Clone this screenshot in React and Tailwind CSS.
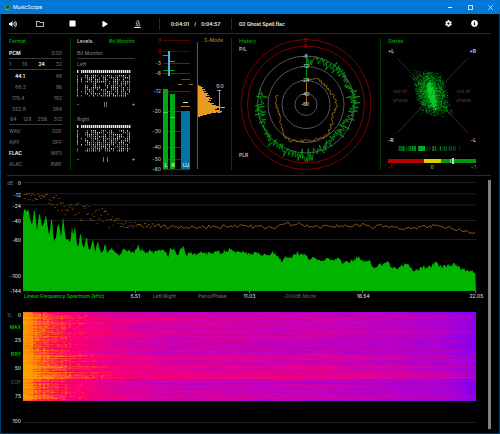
import { FaPlay, FaStop, FaVolumeUp, FaRegFolder, FaCog, FaInfoCircle } from 'react-icons/fa'
import clsx from 'clsx'

// small seeded generator so the meters look the same on every load
function createRandom(seed) {
  let s = seed
  return () => {
    s = (s * 1664525 + 1013904223) % 4294967296
    return s / 4294967296
  }
}

function interpolate(points, x) {
  if (x <= points[0][0]) return points[0][1]
  for (let i = 1; i < points.length; i++) {
    if (x <= points[i][0]) {
      const [x0, y0] = points[i - 1]
      const [x1, y1] = points[i]
      return y0 + ((y1 - y0) * (x - x0)) / (x1 - x0)
    }
  }
  return points[points.length - 1][1]
}

const FORMAT_ROWS = [
  { items: ['PCM', 'DSD'], active: 'PCM', line: true },
  { items: ['1', '16', '24', '32'], active: '24', line: true },
  { items: ['44.1', '48'], active: '44.1', inset: 'pl-[6px]' },
  { items: ['88.2', '96'], inset: 'pl-[6px]' },
  { items: ['176.4', '192'], inset: 'pl-[3px]' },
  { items: ['352.8', '384'], inset: 'pl-[3px]' },
  { items: ['64', '128', '256', '512'], line: true, inset: 'pl-px' },
  { items: ['WAV', 'DSF'] },
  { items: ['AIFF', 'DFF'] },
  { items: ['FLAC', 'MP3'], active: 'FLAC' },
  { items: ['ALAC', 'BWF'] },
]

function TitleBar() {
  return (
    <header className="flex h-3.5 items-center bg-[#0078d7] pl-1 text-white">
      <svg className="h-[7px] w-[7px]" viewBox="0 0 14 14">
        <circle cx="7" cy="7" r="7" fill="#1d8f86" />
        <path d="M5 11 L8 3 L10 7 L9 12 M4 5 L7 7" stroke="#0b3a36" strokeWidth="1.8" fill="none" />
        <path d="M3 10 Q7 13 11 9" stroke="#8fe0c4" strokeWidth="1" fill="none" />
      </svg>
      <h1 className="ml-[2px] font-normal">MusicScope</h1>
      <div className="ml-auto flex h-full">
        <button aria-label="Minimize" className="flex w-5 items-center justify-center">
          <span className="h-px w-1 bg-white" />
        </button>
        <button aria-label="Maximize" className="flex w-5 items-center justify-center">
          <span className="h-[5px] w-[5px] border border-white/80" />
        </button>
        <button aria-label="Close" className="flex w-5 items-center justify-center">
          <svg className="h-[5px] w-[5px]" viewBox="0 0 5 5">
            <path d="M0.3 0.3 L4.7 4.7 M4.7 0.3 L0.3 4.7" stroke="#fff" strokeWidth="0.7" />
          </svg>
        </button>
      </div>
    </header>
  )
}

function MicroscopeIcon() {
  return (
    <svg className="h-2 w-[7px]" viewBox="0 0 14 16" fill="none" stroke="#eee" strokeWidth="1.3">
      <path d="M7 1 L4 7.5 L7.5 9 L10 2.4 Z" />
      <path d="M10 6 Q13.5 9 10 12 M3 11.5 H11" />
      <path d="M0.5 15 H13.5" strokeWidth="2" />
    </svg>
  )
}

function Toolbar() {
  const iconButton = 'flex h-full items-center justify-center'
  return (
    <div className="mr-2 ml-[6px] flex h-5 items-center border-b border-[#004a00] font-semibold text-gray-100">
      <button aria-label="Volume" className={clsx(iconButton, 'w-3')}>
        <FaVolumeUp className="h-2 w-2" />
      </button>
      <button aria-label="Open" className={clsx(iconButton, 'ml-[5px] w-8')}>
        <FaRegFolder className="h-2 w-2" />
      </button>
      <button aria-label="Stop" className={clsx(iconButton, 'w-8')}>
        <FaStop className="h-[7px] w-[7px] text-white" />
      </button>
      <button aria-label="Play" className={clsx(iconButton, 'w-[33px]')}>
        <FaPlay className="h-1.5 w-1.5 text-white" />
      </button>
      <button aria-label="Analyse" className={clsx(iconButton, 'w-[33px]')}>
        <MicroscopeIcon />
      </button>
      <div className="ml-[5px] flex h-3 w-[73px] items-center justify-center gap-[5px] border-x border-[#004000]">
        <span>0:04:01</span>
        <span>/</span>
        <span>0:04:57</span>
      </div>
      <p className="ml-[7px]">02 Ghost Spell.flac</p>
      <div className="mr-1 ml-auto flex h-full">
        <button aria-label="Settings" className={clsx(iconButton, 'w-[26px]')}>
          <FaCog className="h-[7px] w-[7px]" />
        </button>
        <button aria-label="Info" className={clsx(iconButton, 'w-[26px]')}>
          <FaInfoCircle className="h-[7px] w-[7px] text-white" />
        </button>
      </div>
    </div>
  )
}

function FormatPanel() {
  return (
    <section className="border-r border-[#003c00] pr-2 pl-[2px]">
      <h2 className="h-2.5 text-[#00b400]">Format</h2>
      {FORMAT_ROWS.map((row) => (
        <div
          key={row.items[0]}
          className={clsx(
            'flex h-[11px] items-center justify-between',
            row.line && 'border-b border-[#3a3a3a]',
            row.inset
          )}
        >
          {row.items.map((item) => (
            <button
              key={item}
              className={clsx(item === row.active ? 'font-semibold text-white' : 'text-[#666]')}
            >
              {item}
            </button>
          ))}
        </div>
      ))}
    </section>
  )
}

function BitMatrix({ seed }) {
  const random = createRandom(seed)
  let top = ''
  let bright = ''
  let dim = ''
  for (let c = 0; c < 27; c++) {
    const x = c * 2
    if (c === 1) continue
    top += `M${x} 0h1.4v3h-1.4z`
    const density = c === 0 ? 0.9 : c < 4 ? 0.15 : 0.45 + random() * 0.5
    for (let r = 0; r < 11; r++) {
      if (random() > density) continue
      const cell = `M${x} ${5 + r * 2}h1v1.6h-1z`
      if (random() > 0.5) bright += cell
      else dim += cell
    }
  }
  return (
    <svg className="h-7 w-[54px]" viewBox="0 0 54 28">
      <path d={top} fill="#e8e8e8" />
      <path d={bright} fill="#c8c8c8" />
      <path d={dim} fill="#777" />
    </svg>
  )
}

function BitChannel({ name, seed, gap }) {
  return (
    <div>
      <h3 className="h-[11px] leading-[11px] text-[#777]">{name}</h3>
      <BitMatrix seed={seed} />
      <div className="flex h-3 items-center justify-between text-gray-300">
        <button aria-label={`${name} less`}>-</button>
        <span className={clsx('flex', gap)}>
          <span className="h-[5px] w-px bg-gray-500" />
          <span className="h-[5px] w-px bg-gray-500" />
        </span>
        <button aria-label={`${name} more`}>+</button>
      </div>
    </div>
  )
}

function LevelsPanel() {
  return (
    <section className="pr-[11px] pl-[6px]">
      <div className="flex h-2.5 items-start justify-between">
        <button className="text-gray-300">Levels</button>
        <button className="text-[#00b400]">Bit Monitor</button>
      </div>
      <h2 className="h-[11px] border-b border-[#3a3a3a] leading-[11px] text-[#777]">Bit Monitor</h2>
      <div className="flex flex-col gap-1">
        <BitChannel name="Left" seed={11} gap="gap-px" />
        <BitChannel name="Right" seed={47} gap="gap-[3px]" />
      </div>
    </section>
  )
}

const METER_SCALE = [
  [3, 2], [0, 13], [-3, 25], [-6, 35], [-12, 53], [-20, 73], [-30, 93], [-40, 109], [-50, 121], [-60, 131],
]

const S_MODE_BINS = [
  1, 3, 5, 4, 7, 5, 8, 6, 10, 9, 11, 8, 12, 14, 11, 13, 10, 12, 16, 14, 18, 22, 27, 19, 17, 21, 24, 18, 13, 9, 5, 2,
]

function MeterPanel() {
  return (
    <section className="flex justify-between border-r border-[#003c00]">
      <svg className="h-[132px] w-12 shrink-0 overflow-visible" viewBox="0 0 48 132">
        {METER_SCALE.map(([label, y]) => (
          <g key={label}>
            <rect x="17" y={y} width="27" height="1" fill={label >= 0 ? '#5a0000' : '#303030'} />
            <text x="15" y={y + 2} textAnchor="end" fontSize="5" fill={label >= 0 ? '#c00000' : '#bbb'}>
              {label}
            </text>
          </g>
        ))}
        <rect x="17" y="51" width="5" height="80" fill="#00a814" />
        <rect x="24" y="56" width="5" height="75" fill="#00a814" />
        <rect x="35" y="73" width="9" height="58" fill="#0073a8" />
        <rect x="17" y="74" width="5" height="1" fill="#30e040" />
        <rect x="24" y="79" width="5" height="1" fill="#30e040" />
        <rect x="17" y="17" width="5" height="1" fill="#00b868" />
        <rect x="24" y="23" width="5" height="1" fill="#00b868" />
        <rect x="17" y="32" width="5" height="1" fill="#00a000" />
        <rect x="24" y="32" width="5" height="1" fill="#00a000" />
        <rect x="22" y="13" width="2" height="25" fill="#48b4e4" />
        <rect x="35" y="41" width="9" height="1" fill="#00699b" />
        <rect x="32" y="46" width="4" height="1" fill="#a06818" />
        <rect x="43" y="46" width="4" height="1" fill="#a06818" />
        <rect x="37" y="64" width="5" height="1" fill="#ddd" />
        <rect x="35" y="68" width="9" height="1" fill="#c07c20" />
        <g fontSize="5" fill="#e0f4e0" textAnchor="middle">
          <text x="20" y="129">L</text>
          <text x="27" y="129">R</text>
          <text x="40" y="129">LU</text>
        </g>
      </svg>
      <div className="flex w-9 flex-col">
        <button className="pl-px text-center leading-1 text-[#b07820]">S-Mode</button>
        <svg className="h-32 w-9" viewBox="0 0 36 128">
          <rect x="2" y="0" width="1" height="127" fill="#7a5010" />
          {S_MODE_BINS.map((w, i) => (
            <rect key={i} x="3" y={43 + i} width={w} height="1" fill="#e89a24" />
          ))}
          <path d="M22 48.5 H26 M22 70.5 H26 M24.5 48 V71" stroke="#999" strokeWidth="1" fill="none" />
          <text x="25" y="46" fontSize="5" fill="#c0c0c0" textAnchor="middle">
            9.0
          </text>
        </svg>
      </div>
    </section>
  )
}

const HISTORY_RINGS = [
  { label: '3', r: 65, y: 2 },
  { label: '0', r: 58.5, y: 8 },
  { label: '-6', r: 48.5, y: 18 },
  { label: '-12', r: 38, y: 28 },
  { label: '-24', r: 24, y: 42 },
  { label: '-40', r: 11, y: 56 },
  { label: '-60', r: 0, y: 66 },
]

const PEAK_RADIUS = [[0, 44], [20, 46], [45, 47], [90, 48], [115, 43], [140, 44], [160, 48], [180, 51], [215, 51], [240, 47], [270, 44], [289, 46]]
const LOUDNESS_RADIUS = [[0, 25], [20, 28], [45, 27], [65, 28], [90, 31], [115, 29], [140, 36], [160, 37], [180, 36], [212, 40], [225, 34], [250, 28], [270, 29], [289, 31]]

function polarTrace(profile, jitter, step, seed) {
  const random = createRandom(seed)
  let d = ''
  for (let a = 0; a <= 289; a += step) {
    const r = interpolate(profile, a) + (random() - 0.5) * jitter * (random() > 0.6 ? 1 : 0.5)
    const rad = (a * Math.PI) / 180
    d += `${d ? 'L' : 'M'}${(74 + r * Math.sin(rad)).toFixed(1)} ${(66.5 - r * Math.cos(rad)).toFixed(1)}`
  }
  return d
}

function HistoryPanel() {
  return (
    <section className="relative border-r border-[#003c00]">
      <svg className="h-[132px] w-full overflow-visible" viewBox="0 0 148 132">
        {HISTORY_RINGS.map((ring) => (
          <circle
            key={ring.label}
            cx="74"
            cy="66.5"
            r={ring.r}
            fill="none"
            strokeWidth="1"
            stroke={ring.r > 50 ? '#800000' : '#555'}
          />
        ))}
        <path d={polarTrace(PEAK_RADIUS, 14, 1.1, 5)} fill="none" stroke="#00a810" strokeWidth="0.8" />
        <path d={polarTrace(LOUDNESS_RADIUS, 4, 2.2, 23)} fill="none" stroke="#b87818" strokeWidth="0.8" />
        <rect x="74" y="20" width="1" height="24" fill="#008c00" />
        <rect x="74" y="44" width="1" height="23" fill="#a86c14" />
        {HISTORY_RINGS.map((ring) => (
          <text
            key={ring.label}
            x="73"
            y={ring.y + 2}
            textAnchor="middle"
            fontSize="5"
            fill={ring.r > 50 ? '#d00000' : '#d0d0d0'}
          >
            {ring.label}
          </text>
        ))}
      </svg>
      <div className="absolute inset-y-0 left-[7px] flex flex-col">
        <h2 className="text-[#00b400]">History</h2>
        <span className="mt-[2px] text-gray-300">P/L</span>
        <span className="mt-auto mb-3 text-gray-300">PLR</span>
      </div>
    </section>
  )
}

function Goniometer() {
  const random = createRandom(91)
  const spread = () => random() + random() - 1
  let dim = ''
  let mid = ''
  let core = ''
  for (let i = 0; i < 2400; i++) {
    const v = spread()
    const x = (43 + v * 6 + spread() * 17).toFixed(1)
    const y = (45 + v * 24).toFixed(1)
    const dot = `M${x} ${y}h.8v.8h-.8z`
    if (i % 3) dim += dot
    else mid += dot
  }
  for (let i = 0; i < 420; i++) {
    const v = random() - 0.5
    core += `M${(43.5 + v * 5 + spread() * 4).toFixed(1)} ${(47 + v * 22 + spread() * 5).toFixed(1)}h.8v.8h-.8z`
  }
  return (
    <svg className="absolute inset-0 h-full w-full" viewBox="0 0 88 95">
      <path d="M9 10 L80 85 M80 10 L9 85" stroke="#2c2c2c" strokeWidth="1" />
      <path d={dim} fill="#006a0c" />
      <path d={mid} fill="#00a018" />
      <path d={core} fill="#10d030" />
    </svg>
  )
}

function BalanceStrip() {
  const random = createRandom(8)
  const bars = []
  for (let x = 8; x < 80; x++) {
    const near = 1.2 - Math.abs(x - 34) / 42
    const level = random() * near
    if (level > 0.15) bars.push({ x, level })
  }
  return (
    <svg className="mt-[3px] h-[5px] w-full" viewBox="0 0 88 5" preserveAspectRatio="none">
      {bars.map((bar) => (
        <rect key={bar.x} x={bar.x} y="0" width="1" height="5" fill="#00b030" opacity={bar.level} />
      ))}
    </svg>
  )
}

function StereoPanel() {
  return (
    <section className="pr-[15px] pl-[7px]">
      <h2 className="h-2.5 text-[#00b400]">Stereo</h2>
      <div className="relative h-[95px]">
        <Goniometer />
        <div className="relative flex h-full flex-col justify-between text-gray-200">
          <div className="flex justify-between">
            <span>+L</span>
            <span>+R</span>
          </div>
          <div className="flex justify-between px-[5px] leading-[9px] text-[#3c3c3c]">
            <p>
              out of
              <br />
              phase
            </p>
            <p>
              out of
              <br />
              phase
            </p>
          </div>
          <div className="flex justify-between">
            <span>-R</span>
            <span>-L</span>
          </div>
        </div>
      </div>
      <BalanceStrip />
      <div className="relative mt-2 flex h-1">
        <div className="w-[41%] bg-[#b80000]" />
        <div className="w-[19%] bg-[#d8d000]" />
        <div className="w-[40%] bg-[#009810]" />
        <div className="absolute -top-px left-[73%] h-1.5 w-[2px] bg-[#c8d8c8]" />
        <div className="absolute top-0 left-[71%] h-1 w-px bg-[#60c870]" />
      </div>
      <div className="mt-px grid grid-cols-3">
        <span className="text-[#c00000]">-1</span>
        <span className="text-center text-[#c0b800]">0</span>
        <span className="text-right text-[#00a810]">+1</span>
      </div>
    </section>
  )
}

// level outline in plot units, 1358 wide and 327 high
const LEVEL_OUTLINE = [
  [0, 106], [4, 76], [10, 90], [16, 80], [22, 116], [28, 130], [34, 74], [42, 146], [49, 88], [57, 134], [62, 126],
  [69, 100], [79, 166], [86, 96], [92, 180], [99, 166], [104, 124], [110, 136], [114, 166], [120, 104], [128, 172],
  [135, 172], [142, 182], [147, 134], [151, 166], [155, 125], [162, 190], [167, 194], [172, 146], [179, 195],
  [184, 196], [191, 158], [196, 202], [202, 206], [209, 164], [216, 206], [224, 180], [232, 211], [240, 206],
  [246, 180], [252, 216], [260, 204], [267, 201], [272, 208], [284, 211], [292, 221], [302, 201], [307, 208],
  [317, 206], [327, 211], [337, 208], [345, 190], [352, 204], [362, 204], [370, 216], [377, 206], [392, 211],
  [402, 206], [417, 204], [432, 214], [437, 226], [440, 197], [452, 204], [462, 216], [472, 206], [482, 195],
  [490, 218], [502, 211], [512, 216], [532, 211], [552, 214], [572, 212], [592, 211], [622, 201], [632, 211],
  [667, 208], [680, 221], [697, 206], [707, 218], [722, 216], [737, 216], [752, 210], [767, 226], [777, 241],
  [785, 224], [802, 228], [822, 212], [832, 221], [845, 214], [857, 231], [872, 226], [892, 234], [912, 232],
  [932, 238], [944, 228], [957, 244], [967, 234], [987, 238], [1002, 226], [1022, 236], [1040, 238], [1052, 261],
  [1067, 248], [1092, 240], [1107, 256], [1122, 261], [1147, 246], [1162, 258], [1177, 266], [1197, 256],
  [1217, 256], [1237, 241], [1257, 256], [1287, 246], [1307, 254], [1327, 266], [1342, 264], [1358, 276],
]

const PEAK_HOLD = [
  [0, 42], [60, 44], [90, 56], [120, 72], [150, 78], [190, 96], [230, 100], [270, 118], [330, 125], [380, 131],
  [470, 137], [570, 134], [682, 134], [760, 137], [782, 120], [800, 128], [830, 126], [860, 134], [930, 134],
  [1030, 127], [1050, 136], [1082, 130], [1150, 141], [1230, 131], [1280, 138], [1320, 147], [1358, 154],
]

const PEAK_SPREAD = [[0, 20], [60, 22], [120, 54], [250, 50], [300, 28], [360, 18], [420, 12], [1358, 10]]

function Spectrum() {
  const random = createRandom(3)
  let outline = 'M0 327'
  for (let x = 0; x <= 1358; x += 3) {
    const y = interpolate(LEVEL_OUTLINE, x) + (x > 200 ? (random() - 0.5) * 12 : 0)
    outline += `L${x} ${y.toFixed(0)}`
  }
  outline += 'L1358 327Z'

  let dots = ''
  let line = ''
  for (let x = 2; x <= 1358; x += 3) {
    const y = interpolate(PEAK_HOLD, x) + (random() - 0.5) * interpolate(PEAK_SPREAD, x)
    if (x < 400) dots += `M${x} ${y.toFixed(0)}h3v3h-3z`
    else if (x % 2) line += `${line ? 'L' : 'M'}${x} ${y.toFixed(0)}`
  }

  return (
    <svg className="mt-[2px] h-[109px] w-full" viewBox="0 0 1358 327" preserveAspectRatio="none">
      {[0, 34, 67, 114, 171].map((y) => (
        <rect key={y} x="0" y={y} width="1358" height="3" fill="#1e1e1e" />
      ))}
      <path d={dots} fill="#946210" />
      <path d={line} fill="none" stroke="#946210" strokeWidth="2.6" />
      <path d={outline} fill="#00b400" />
    </svg>
  )
}

const HEAT_STOPS = [
  [0, [112, 0, 255]],
  [0.2, [160, 0, 220]],
  [0.36, [196, 0, 184]],
  [0.5, [232, 0, 140]],
  [0.62, [255, 0, 104]],
  [0.74, [255, 60, 56]],
  [0.86, [255, 128, 10]],
  [1, [255, 160, 0]],
]

function heatColor(t) {
  const channel = (i) => Math.round(interpolate(HEAT_STOPS.map(([p, rgb]) => [p, rgb[i]]), t))
  return `rgb(${channel(0)},${channel(1)},${channel(2)})`
}

const HEAT_BY_FREQUENCY = [
  [0, 0.94], [6, 0.9], [10, 0.82], [16, 0.76], [26, 0.71], [40, 0.64], [60, 0.56], [85, 0.49], [120, 0.43], [200, 0.4],
  [300, 0.37], [370, 0.32], [420, 0.26], [440, 0.19], [452, 0.12],
]

const HEAT_BY_TIME = [[0, 0], [8, 0.03], [18, 0], [36, -0.03], [44, 0.04], [58, 0.06], [63, 0.06], [64, 0.1], [66, 0.11], [67, -0.03], [80, -0.02], [89, -0.01]]

function Spectrogram() {
  const random = createRandom(77)
  const levels = 32
  const paths = new Array(levels).fill('')
  const columns = Array.from({ length: 226 }, () => random() - 0.5)
  for (let y = 0; y < 89; y++) {
    const row = interpolate(HEAT_BY_TIME, y) + (random() - 0.5) * 0.11
    let streak = 0
    for (let c = 0; c < 226; c++) {
      const x = c * 2
      const left = Math.max(0, 1 - x / 170)
      streak = streak * 0.9 + (random() - 0.5) * 0.04
      const tonal = x < 8 ? 0 : left * (columns[c] * 0.08 + (random() > 0.84 ? 0.12 : 0))
      let t = interpolate(HEAT_BY_FREQUENCY, x) + row + streak + tonal
      if (y === 0 || y === 88) t -= 0.12
      const bucket = Math.min(levels - 1, Math.max(0, Math.floor(t * levels)))
      paths[bucket] += `M${x} ${y}h2v1h-2z`
    }
  }
  return (
    <svg className="h-[89px] w-full" viewBox="0 0 452 89" preserveAspectRatio="none" shapeRendering="crispEdges">
      {paths.map((d, i) => d && <path key={i} d={d} fill={heatColor(i / (levels - 1))} />)}
    </svg>
  )
}

function SpectrumSection() {
  return (
    <section className="flex">
      <div className="mr-[2px] w-3.5 shrink-0 text-right text-gray-300">
        <div className="flex h-3 justify-between">
          <span className="text-[#666]">dB</span>
          <span>0</span>
        </div>
        <div className="h-[11px]">-12</div>
        <div className="h-[15px]">-24</div>
        <div className="h-[19px]">-40</div>
        <div className="h-9">-60</div>
        <div className="h-[15px]">-100</div>
        <div>-144</div>
      </div>
      <div className="min-w-0 flex-1">
        <div className="pr-3">
          <Spectrum />
          <div className="grid h-[2px] grid-cols-4">
            <span className="border-r border-gray-500" />
            <span className="border-r border-gray-500" />
            <span className="border-r border-gray-500" />
            <span className="border-r border-gray-500" />
          </div>
        </div>
        <div className="grid grid-cols-[105fr_14fr_44fr_52fr_22fr_78fr_49fr_77fr_23fr] text-center whitespace-nowrap text-gray-300">
          <button className="pl-px text-left text-[#00c400]">Linear Frequency Spectrum [kHz]</button>
          <span>5.51</span>
          <button className="text-[#6a6a6a]">Left/Right</button>
          <button className="text-[#6a6a6a]">Pano/Phase</button>
          <span>11.03</span>
          <button className="text-[#5a5a5a]">-200dB Mode</button>
          <span>16.54</span>
          <span />
          <span>22.05</span>
        </div>
      </div>
    </section>
  )
}

function SpectrogramSection() {
  return (
    <section className="mt-[13px] flex">
      <div className="mr-[2px] w-3.5 shrink-0 text-right text-gray-300">
        <div className="flex h-3 justify-between">
          <span className="text-[#777]">%</span>
          <span>0</span>
        </div>
        <button className="block h-[13px] w-full text-right text-[#00c400]">
          <span className="block h-full">MAX</span>
        </button>
        <div className="h-3.5">25</div>
        <button className="block h-3.5 w-full text-right text-[#00c400]">
          <span className="block h-full">BRY</span>
        </button>
        <div className="h-3.5">50</div>
        <button className="block h-3.5 w-full text-right text-[#555]">
          <span className="block h-full">COF</span>
        </button>
        <div className="h-[25px]">75</div>
        <div>100</div>
      </div>
      <div className="min-w-0 flex-1 pr-3">
        <div className="h-[111px] border-b border-[#1e1e1e]">
          <Spectrogram />
        </div>
      </div>
    </section>
  )
}

export default function App() {
  return (
    <div className="flex min-h-screen flex-col bg-black font-['Inter',sans-serif] text-[5px] leading-[6px] font-medium">
      <TitleBar />
      <main className="flex flex-1 flex-col border-x border-b border-[#003e70]">
        <Toolbar />
        <div className="mr-2 ml-[6px] grid grid-cols-[64fr_75fr_86fr_149fr_110fr] border-b border-[#004a00] pt-1 pb-[5px]">
          <FormatPanel />
          <LevelsPanel />
          <MeterPanel />
          <HistoryPanel />
          <StereoPanel />
        </div>
        <div className="mr-2 ml-[6px] flex flex-1 pt-1 pb-1">
          <div className="min-w-0 flex-1">
            <SpectrumSection />
            <SpectrogramSection />
          </div>
          <div className="w-[3px] bg-[#808080]" />
        </div>
      </main>
    </div>
  )
}
